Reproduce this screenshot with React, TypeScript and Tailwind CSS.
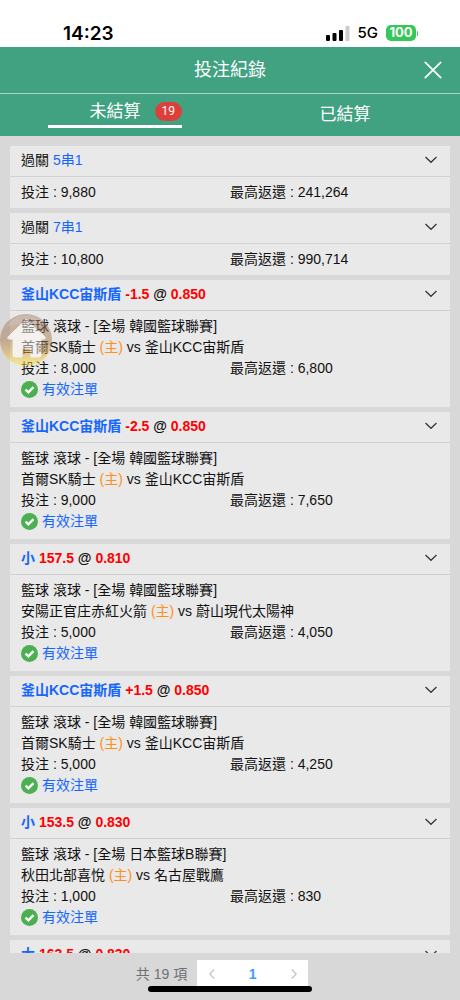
import { useState } from 'react';

interface Bet {
    id: number;
    parlay?: string;
    pick?: string;
    line?: string;
    odds?: string;
    league?: string;
    home?: string;
    away?: string;
    stake: string;
    payout: string;
}

const bets: Bet[] = [
    { id: 1, parlay: '5串1', stake: '9,880', payout: '241,264' },
    { id: 2, parlay: '7串1', stake: '10,800', payout: '990,714' },
    { id: 3, pick: '釜山KCC宙斯盾', line: '-1.5', odds: '0.850', league: '韓國籃球聯賽', home: '首爾SK騎士', away: '釜山KCC宙斯盾', stake: '8,000', payout: '6,800' },
    { id: 4, pick: '釜山KCC宙斯盾', line: '-2.5', odds: '0.850', league: '韓國籃球聯賽', home: '首爾SK騎士', away: '釜山KCC宙斯盾', stake: '9,000', payout: '7,650' },
    { id: 5, pick: '小', line: '157.5', odds: '0.810', league: '韓國籃球聯賽', home: '安陽正官庄赤紅火箭', away: '蔚山現代太陽神', stake: '5,000', payout: '4,050' },
    { id: 6, pick: '釜山KCC宙斯盾', line: '+1.5', odds: '0.850', league: '韓國籃球聯賽', home: '首爾SK騎士', away: '釜山KCC宙斯盾', stake: '5,000', payout: '4,250' },
    { id: 7, pick: '小', line: '153.5', odds: '0.830', league: '日本籃球B聯賽', home: '秋田北部喜悅', away: '名古屋戰鷹', stake: '1,000', payout: '830' },
    { id: 8, pick: '大', line: '163.5', odds: '0.830', league: '日本籃球B聯賽', home: '秋田北部喜悅', away: '名古屋戰鷹', stake: '1,000', payout: '830' },
];

function StatusBar() {
    return (
        <div className="flex h-[47px] shrink-0 items-end justify-between bg-white pr-[42px] pb-px pl-[63px] text-black">
            <span className="font-['Inter'] text-[19px] leading-[24px] font-semibold">14:23</span>
            <div className="flex h-[26px] items-center gap-2">
                <svg width="24" height="16" viewBox="0 0 24 16" aria-hidden="true">
                    <rect x="0" y="10" width="4" height="6" rx="1" />
                    <rect x="6.5" y="8" width="4" height="8" rx="1" />
                    <rect x="13" y="5" width="4" height="11" rx="1" />
                    <rect x="19.5" y="1" width="4" height="15" rx="1" fill="#cccccc" />
                </svg>
                <span className="font-['Inter'] text-[15px] leading-[20px] font-medium">5G</span>
                <div className="flex items-center gap-px">
                    <span className="flex h-4 w-[30px] items-center justify-center rounded-[5px] bg-[#35c759] font-['Inter'] text-[13px] font-bold text-white">100</span>
                    <span className="h-[5px] w-px rounded-r bg-[#35c759]" />
                </div>
            </div>
        </div>
    );
}

function ChevronIcon() {
    return (
        <svg width="12" height="8" viewBox="0 0 12 8" fill="none" stroke="#333" strokeWidth="1.2" aria-hidden="true">
            <path d="M0.5 1l5.500 5.300L11.500 1" />
        </svg>
    );
}

function CheckBadge() {
    return (
        <svg width="17" height="17" viewBox="0 0 17 17" aria-hidden="true">
            <circle cx="8.5" cy="8.5" r="8.5" fill="#4caf50" />
            <path d="M4.600 8.600l2.800 2.800 5.100-5.200" fill="none" stroke="#fff" strokeWidth="2.4" />
        </svg>
    );
}

function BetCard({ bet, open, onToggle }: { bet: Bet; open: boolean; onToggle: () => void }) {
    return (
        <li className="bg-[#e9e9e9]">
            <button
                type="button"
                onClick={onToggle}
                aria-expanded={open}
                className="flex h-[31px] w-full items-center justify-between border-b border-[#d2d2d2] pr-[13px] pb-[2px] pl-[11px] text-left"
            >
                {bet.parlay ? (
                    <span>過關 <span className="text-[#1466ff]">{bet.parlay}</span></span>
                ) : (
                    <span className="font-bold">
                        <span className="text-[#1466ff]">{bet.pick}</span>{' '}
                        <span className="text-[#ff0000]">{bet.line}</span> @ <span className="text-[#ff0000]">{bet.odds}</span>
                    </span>
                )}
                <ChevronIcon />
            </button>
            {open && (
                <div className={`px-[11px] pt-[5px] leading-[21px] ${bet.parlay ? 'pb-[5px]' : 'pb-[7px]'}`}>
                    {bet.league && (
                        <>
                            <p>籃球 滾球 - [全場 {bet.league}]</p>
                            <p>{bet.home} <span className="text-[#ff9020]">(主)</span> vs {bet.away}</p>
                        </>
                    )}
                    <div className="grid grid-cols-2">
                        <p>投注 : {bet.stake}</p>
                        <p>最高返還 : {bet.payout}</p>
                    </div>
                    {bet.league && (
                        <p className="flex items-center gap-1 text-[#1466ff]">
                            <CheckBadge />
                            有效注單
                        </p>
                    )}
                </div>
            )}
        </li>
    );
}

function HomeButton() {
    return (
        <button type="button" aria-label="首頁" className="absolute top-[314px] left-0 opacity-50">
            <svg width="52" height="52" viewBox="0 0 52 52" className="block" aria-hidden="true">
                <defs>
                    <linearGradient id="homeBg" x1="0" y1="0" x2="0" y2="1">
                        <stop offset="0" stopColor="#a07c68" />
                        <stop offset="0.5" stopColor="#a87c50" />
                        <stop offset="0.75" stopColor="#e0a840" />
                        <stop offset="1" stopColor="#fff040" />
                    </linearGradient>
                </defs>
                <circle cx="26" cy="26" r="26" fill="url(#homeBg)" />
                <path d="M5 14A24 24 0 0 1 47 14Q26 5 5 14Z" fill="#fff" opacity="0.12" />
                <path
                    d="M26 5.500L45 23Q46 25 44 25H41V41Q41 43 39 43H31V37Q31 34 26.500 34Q22 34 22 37V43H15Q13 43 13 41V25H9Q7 25 8 23Z"
                    fill="#fffaf6"
                    stroke="#fffaf6"
                    strokeLinejoin="round"
                />
            </svg>
        </button>
    );
}

export default function App() {
    const [tab, setTab] = useState<'open' | 'settled'>('open');
    const [closed, setClosed] = useState<number[]>([]);

    const toggle = (id: number) => {
        setClosed(closed.includes(id) ? closed.filter((c) => c !== id) : [...closed, id]);
    };

    return (
        <div className="relative flex h-dvh flex-col overflow-hidden bg-[#d8d8d8] font-['Liberation_Sans','Noto_Sans_CJK_TC',sans-serif] text-[14px] text-[#111111]">
            <StatusBar />

            <header className="grid h-[47px] shrink-0 grid-cols-[1fr_auto_1fr] items-center border-b border-[#b4cfc4] bg-[#40a280] px-[18px] text-white">
                <h1 className="col-start-2 text-[18px] leading-[24px]">投注紀錄</h1>
                <button type="button" aria-label="關閉" className="justify-self-end">
                    <svg width="18" height="18" viewBox="0 0 18 18" fill="none" stroke="currentColor" strokeWidth="1.7" strokeLinecap="round" aria-hidden="true">
                        <path d="M1.300 1.300l15.400 15.400M16.700 1.300L1.300 16.700" />
                    </svg>
                </button>
            </header>

            <nav className="grid h-[42px] shrink-0 grid-cols-2 justify-items-center bg-[#40a280] text-[17px] leading-[24px] text-white">
                <button
                    type="button"
                    onClick={() => setTab('open')}
                    className={`relative h-[34px] w-[134px] pt-1 ${tab === 'open' ? 'border-b-3 border-white' : ''}`}
                >
                    未結算
                    <span className="absolute top-2 right-0 rounded-full bg-[#dd403a] px-[7px] font-['Roboto'] text-[12px] leading-[19px]">19</span>
                </button>
                <button
                    type="button"
                    onClick={() => setTab('settled')}
                    className={`h-[34px] w-[134px] pt-2 ${tab === 'settled' ? 'border-b-3 border-white' : ''}`}
                >
                    已結算
                </button>
            </nav>

            <main className="min-h-0 flex-1 overflow-y-auto px-[10px] pt-[10px] [scrollbar-width:none]">
                <ul className="flex flex-col gap-[5px]">
                    {bets.map((bet) => (
                        <BetCard key={bet.id} bet={bet} open={!closed.includes(bet.id)} onToggle={() => toggle(bet.id)} />
                    ))}
                </ul>
            </main>

            <footer className="relative flex h-[47px] shrink-0 items-start justify-center gap-[10px] pt-[7px] pr-4 leading-[28px]">
                <span className="text-[#6f7074]">共 19 項</span>
                <div className="grid h-[28px] grid-cols-3 bg-white">
                    <button type="button" aria-label="上一頁" className="flex w-[37px] items-center justify-center pr-2">
                        <svg width="6" height="10" viewBox="0 0 6 10" fill="none" stroke="#c0c4cc" strokeWidth="1.2" aria-hidden="true">
                            <path d="M5.200 0.500L0.800 5l4.400 4.500" />
                        </svg>
                    </button>
                    <button type="button" className="w-[37px] font-bold text-[#409eff]">1</button>
                    <button type="button" aria-label="下一頁" className="flex w-[37px] items-center justify-center pl-2">
                        <svg width="6" height="10" viewBox="0 0 6 10" fill="none" stroke="#c0c4cc" strokeWidth="1.2" aria-hidden="true">
                            <path d="M0.800 0.500L5.200 5 0.800 9.500" />
                        </svg>
                    </button>
                </div>
                <div className="absolute bottom-2 left-1/2 h-[6px] w-[164px] -translate-x-1/2 rounded-full bg-black" />
            </footer>

            <HomeButton />
        </div>
    );
}
